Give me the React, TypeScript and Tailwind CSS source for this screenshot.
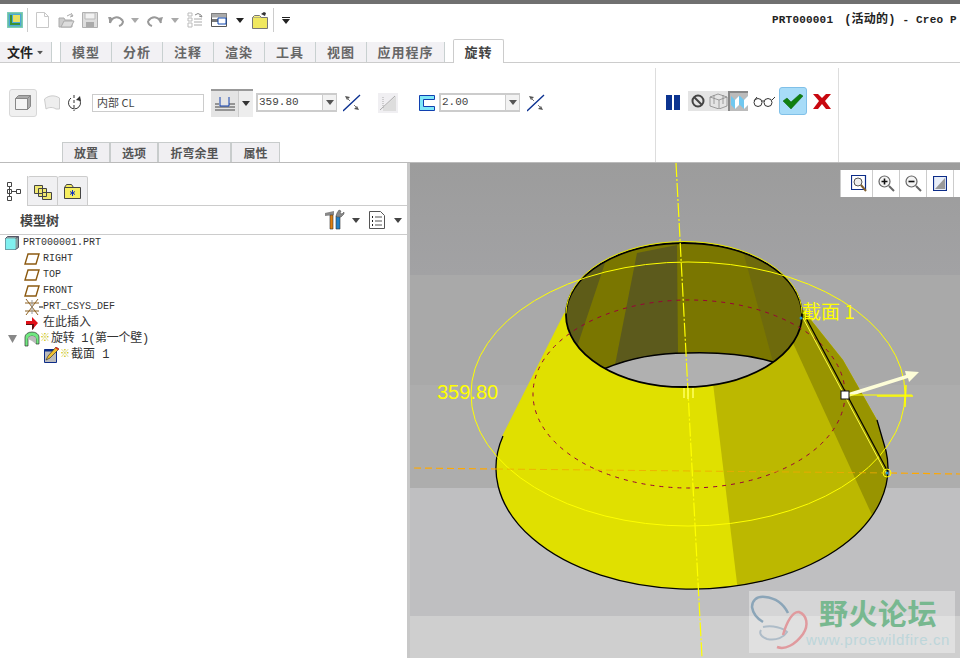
import type { ReactNode } from "react";

const cjk = "font-['Liberation_Mono','Noto_Sans_CJK_SC',monospace]";

const Caret = ({ className = "" }: { className?: string }) => (
    <svg width="8" height="5" viewBox="0 0 8 5" className={className}>
        <path d="M0 0h8L4 5z" fill="#555" />
    </svg>
);

const RibbonTab = ({ label, width }: { label: string; width: string }) => (
    <div className={`${width} h-[20px] flex items-center justify-center bg-[#f2f1f4] border-l border-[#c8d0d0] text-[13px] font-bold text-[#666] tracking-[1px]`}>
        {label}
    </div>
);

const SubTab = ({ label, width }: { label: string; width: string }) => (
    <div className={`${width} h-[20px] flex items-center justify-center bg-[#f0eff2] border border-b-0 border-[#c8cccc] text-[12px] font-bold text-[#555]`}>
        {label}
    </div>
);

const Flip = () => (
    <svg width="18" height="18" viewBox="0 0 18 18">
        <path d="M0 17L17 1" stroke="#0a3090" strokeWidth="1.3" />
        <path d="M2 2l5 1-3 3zM16 16l-5-1 3-3z" fill="#555" />
        <path d="M4 4l3 3M14 14l-3-3" stroke="#777" />
    </svg>
);

const SpinInput = ({ value, width }: { value: string; width: string }) => (
    <div className="flex h-[19px] border-2 border-[#ccc] border-r-1 bg-white">
        <div className={`${width} flex items-center pl-[1px] text-[11px] text-[#444] font-['Liberation_Mono',monospace]`}>{value}</div>
        <div className="w-[14px] bg-[#f2f2f2] flex items-center justify-center border-l border-[#ccc]">
            <Caret />
        </div>
    </div>
);

const QuickIcons = () => (
    <div className="flex items-center h-[32px] pl-[7px]">
        <svg width="16" height="16" viewBox="0 0 16 16">
            <rect width="16" height="16" fill="#7fc8e8" />
            <rect x="1" y="1" width="14" height="14" fill="#4aa8d8" stroke="#80d080" />
            <path d="M4 3v9h9" fill="none" stroke="#3c9030" strokeWidth="2" />
            <path d="M6 3h7v7H6z" fill="#e8e060" />
        </svg>
        <div className="w-px h-[24px] bg-[#ccc] ml-[4px] mr-[8px]" />
        <svg width="13" height="16" viewBox="0 0 13 16">
            <path d="M.5.5h8l4 4v11H.5z" fill="#fff" stroke="#c8c8c8" />
            <path d="M8.5.5v4h4" fill="none" stroke="#c8c8c8" />
        </svg>
        <svg width="17" height="16" viewBox="0 0 17 16" className="ml-[9px]">
            <path d="M1 6h5l1 2h7v7H1z" fill="#ccc" stroke="#aaa" />
            <path d="M3 15l3-6h10l-3 6z" fill="#ddd" stroke="#aaa" />
            <path d="M9 4q3-3 6 0M13 1l2 3-3 1" fill="none" stroke="#aaa" />
        </svg>
        <svg width="16" height="16" viewBox="0 0 16 16" className="ml-[7px]">
            <path d="M.5.5h15v15H.5z" fill="#ddd" stroke="#b0b0b0" />
            <path d="M3 1h10v6H3z" fill="#f2f2f2" stroke="#bbb" />
            <path d="M4 10h8v5H4z" fill="#aaa" />
        </svg>
        <svg width="16" height="13" viewBox="0 0 16 13" className="ml-[10px]">
            <path d="M2 3v6M2 9c2-6 8-8 13-2M11 12c3-1 4-3 4-5" fill="none" stroke="#999" strokeWidth="2" />
            <path d="M0 3l5 1-3 5z" fill="#999" />
        </svg>
        <Caret className="ml-[7px] opacity-50" />
        <svg width="16" height="13" viewBox="0 0 16 13" className="ml-[8px] scale-x-[-1]">
            <path d="M2 9c2-6 8-8 13-2M11 12c3-1 4-3 4-5" fill="none" stroke="#999" strokeWidth="2" />
            <path d="M0 3l5 1-3 5z" fill="#999" />
        </svg>
        <Caret className="ml-[8px] opacity-50" />
        <svg width="16" height="16" viewBox="0 0 16 16" className="ml-[8px]">
            <path d="M1 1h4v3H1zM1 6h4v3H1zM1 11h4v4H1z" fill="none" stroke="#bbb" />
            <path d="M7 13h8M7 10h8M7 7h8" stroke="#aaa" />
            <path d="M8 3q3-3 6 0l1 2-3-1" fill="none" stroke="#888" />
        </svg>
        <svg width="16" height="14" viewBox="0 0 16 14" className="ml-[8px]">
            <path d="M.5.5h15v13H.5z" fill="#fff" stroke="#555" />
            <path d="M.5.5h15v4H.5z" fill="#aaa" />
            <path d="M1 6h6v3H1z" fill="#777" />
            <path d="M7 5h8v6H7z" fill="#fff" stroke="#1048b0" />
        </svg>
        <Caret className="ml-[9px] [&>path]:fill-[#222]" />
        <svg width="16" height="18" viewBox="0 0 16 18" className="ml-[8px]">
            <path d="M.5 6.5h15v11H.5z" fill="#f0e860" stroke="#777" />
            <path d="M.5 6.5l2-2h5l2 2" fill="#f8f080" stroke="#777" />
            <path d="M9 3l3-2 2 1-1 3z" fill="#333" />
        </svg>
        <div className="w-px h-[24px] bg-[#ccc] ml-[5px] mr-[8px]" />
        <svg width="8" height="7" viewBox="0 0 8 7">
            <path d="M0 0h8v1H0z M0 2h8L4 7z" fill="#222" />
        </svg>
    </div>
);

const Ribbon = () => (
    <div className="h-[100px] flex border-t border-[#ccc]">
        <div className="w-[655px] shrink-0 flex flex-col">
            <div className="h-[79px] flex items-center pl-[9px]">
                <div className="w-[28px] h-[28px] rounded-[3px] bg-[#f0f0f0] border border-[#d8d8d8] flex items-center justify-center">
                    <svg width="16" height="15" viewBox="0 0 16 15">
                        <path d="M.5 3.5h12v11H.5z" fill="#f4f4f4" stroke="#888" />
                        <path d="M.5 3.5l3-3h12l-3 3zM12.5 3.5l3-3v11l-3 3z" fill="#aaa" stroke="#888" />
                    </svg>
                </div>
                <svg width="16" height="15" viewBox="0 0 16 15" className="ml-[7px]">
                    <path d="M.5 4C5 0 11 0 15.5 3v11H12c-3-2-7-2-10 0z" fill="#eee" stroke="#ccc" />
                </svg>
                <svg width="15" height="16" viewBox="0 0 15 16" className="ml-[7px]">
                    <path d="M4 3a6 6 0 1 0 7 0" fill="none" stroke="#333" />
                    <path d="M7 0v16" stroke="#333" strokeDasharray="3 2" />
                    <path d="M9 5l4-4 1 5z" fill="#333" />
                </svg>
                <div className="ml-[10px] w-[112px] h-[18px] border border-[#ccc] flex items-center pl-[4px] text-[11px] text-[#444]">内部 CL</div>
                <div className="ml-[7px] w-[42px] h-[28px] bg-[#e4e4e4] border-t-2 border-[#999] flex">
                    <div className="w-[27px] flex items-center justify-center">
                        <svg width="20" height="16" viewBox="0 0 20 16">
                            <path d="M0 8h4M14 8h6M0 11h20M0 14h20" stroke="#444" />
                            <path d="M5 1v9h9V1" fill="none" stroke="#1040b0" />
                        </svg>
                    </div>
                    <div className="flex-1 bg-[#ededed] flex items-center justify-center border-l border-[#ccc]">
                        <Caret className="[&>path]:fill-[#333]" />
                    </div>
                </div>
                <div className="ml-[3px]"><SpinInput value="359.80" width="w-[64px]" /></div>
                <div className="ml-[6px]"><Flip /></div>
                <div className="ml-[17px] w-[20px] h-[20px] bg-[#f0eff2] flex items-center justify-center">
                    <svg width="16" height="16" viewBox="0 0 16 16">
                        <path d="M3 13L16 1v15H3z" fill="#ddd" />
                        <path d="M0 15L15 1" stroke="#aaa" />
                        <path d="M3 2v12" stroke="#aaa" strokeDasharray="1 1" />
                    </svg>
                </div>
                <svg width="16" height="16" viewBox="0 0 16 16" className="ml-[21px]">
                    <path d="M.5.5h15v4H4.500v7h11v4H.5z" fill="#7fe8f8" stroke="#1040b0" />
                </svg>
                <div className="ml-[4px]"><SpinInput value="2.00" width="w-[64px]" /></div>
                <div className="ml-[7px]"><Flip /></div>
            </div>
            <div className="flex pl-[62px]">
                <SubTab label="放置" width="w-[48px]" />
                <SubTab label="选项" width="w-[48px]" />
                <SubTab label="折弯余里" width="w-[73px]" />
                <SubTab label="属性" width="w-[49px]" />
            </div>
        </div>
        <div className="w-[184px] mt-[5px] border-x border-[#ddd] flex items-start pt-[19px] pl-[10px]">
            <div className="flex gap-[2px] mt-[8px] w-[14px] h-[15px] shrink-0">
                <div className="w-[6px] bg-[#0c3490]" />
                <div className="w-[6px] bg-[#0c3490]" />
            </div>
            <div className="ml-[8px] mt-[4px] flex h-[20px] w-[60px] shrink-0 bg-[#e4e4e4]">
                <div className="w-[20px] flex items-center justify-center">
                    <svg width="14" height="14" viewBox="0 0 14 14">
                        <circle cx="7" cy="7" r="5.5" fill="none" stroke="#444" strokeWidth="2" />
                        <path d="M3 3l8 8" stroke="#444" strokeWidth="2" />
                    </svg>
                </div>
                <div className="w-[20px] flex items-center justify-center">
                    <svg width="19" height="16" viewBox="0 0 19 16">
                        <path d="M1 4l8-3 9 3v9l-8 3-9-3zM1 4l9 3 8-3M10 7v9M5 2l0 9M14 2v9" fill="none" stroke="#888" strokeWidth=".8" />
                    </svg>
                </div>
                <div className="w-[20px] bg-[#bbb] border-l-2 border-t-2 border-[#888] flex items-center justify-center">
                    <svg width="17" height="13" viewBox="0 0 17 13">
                        <path d="M0 0l4 4 4-4 1 0 4 4 4-4v9l-4 4-4-4-1 0-4 4-4-4z" fill="#70c8f0" />
                        <path d="M4 4l4-4v9l-4 4zM13 4l4-4v9l-4 4z" fill="#fff" />
                    </svg>
                </div>
            </div>
            <svg width="22" height="11" viewBox="0 0 22 11" className="ml-[5px] mt-[9px] shrink-0">
                <circle cx="5" cy="6.5" r="4" fill="#fff" stroke="#333" />
                <circle cx="15" cy="6.5" r="4" fill="#fff" stroke="#333" />
                <path d="M9 5l2 0M19 4l3-3M1 5l3-4" fill="none" stroke="#333" />
            </svg>
            <div className="ml-[4px] w-[28px] h-[28px] rounded-[3px] bg-[#a8dcf8] border border-[#80c0e8] flex items-center justify-center shrink-0">
                <svg width="20" height="15" viewBox="0 0 20 15">
                    <path d="M0 7l4-3 4 4 9-8 3 2L8 15z" fill="#108010" stroke="#0a600a" strokeWidth=".5" />
                </svg>
            </div>
            <svg width="18" height="16" viewBox="0 0 18 16" className="ml-[6px] mt-[6px] shrink-0">
                <path d="M0 1h5l4 4 4-4h5l-6 7 6 8h-5l-4-5-4 5H0l6-8z" fill="#c80810" />
            </svg>
        </div>
    </div>
);

const Row = ({ icon, indent, children }: { icon: ReactNode; indent: string; children: ReactNode }) => (
    <div className={`h-[16px] flex items-center ${indent} text-[10px] leading-none text-[#333] whitespace-pre`}>
        {icon}
        {children}
    </div>
);

const Plane = () => (
    <svg width="16" height="12" viewBox="0 0 16 12" className="mr-[3px]">
        <path d="M4 1h11l-3 10H1z" fill="none" stroke="#8c5a10" strokeWidth="1.4" />
    </svg>
);

const Star = () => <span className="text-[#c8c000] text-[10px] mr-[1px]">※</span>;

const ModelTree = () => (
    <div className="w-[407px] shrink-0 flex flex-col bg-white">
        <div className="h-[13px]" />
        <div className="h-[30px] flex">
            <div className="w-[28px] bg-white border-r border-[#ccc] flex items-center justify-center">
                <svg width="14" height="19" viewBox="0 0 14 19">
                    <path d="M.5.5h4v4h-4zM.5 7.5h4v4h-4zM9.5 7.5h4v4h-4zM.5 14.5h4v4h-4zM2.5 4.5v10M4.5 9.5h5" fill="#fff" stroke="#444" />
                </svg>
            </div>
            <div className="w-[30px] bg-[#f0f0f2] border-r border-t border-[#ccc] rounded-t-[2px] flex items-center justify-center border-b">
                <svg width="18" height="18" viewBox="0 0 18 18">
                    <path d="M.5 3.5h8v8h-8zM4.5 6.5h8v8h-8zM8.5 10.5h9v7h-9z" fill="#f0e870" stroke="#444" />
                </svg>
            </div>
            <div className="w-[30px] bg-[#f0f0f2] border-r border-t border-b border-[#ccc] rounded-t-[2px] flex items-center justify-center">
                <svg width="17" height="15" viewBox="0 0 17 15">
                    <path d="M.5 3.5h16v11H.5zM.5 3.5l2-3h5l2 3" fill="#f6ee60" stroke="#444" />
                    <path d="M8.500 6v6M6 7.500l5 3M11 7.500l-5 3" stroke="#1030c0" />
                </svg>
            </div>
            <div className="flex-1 border-b border-[#ccc]" />
        </div>
        <div className="h-[29px] flex items-center pl-[20px] border-b border-[#ccc]">
            <span className="text-[13px] font-bold text-[#444] font-['Noto_Sans_CJK_SC',sans-serif]">模型树</span>
            <svg width="20" height="22" viewBox="0 0 20 22" className="ml-auto">
                <path d="M0 4l9-2v4L0 7z" fill="#888" />
                <path d="M5 6h3v14H5z" fill="#e08010" stroke="#333" strokeWidth=".6" />
                <path d="M11 7h4v13h-4z" fill="#2080c8" stroke="#333" strokeWidth=".6" />
                <path d="M11 7l1-3 2-3 2 1-1 2 2 1 2-2v2l-3 3h-4z" fill="#888" stroke="#444" strokeWidth=".5" />
            </svg>
            <Caret className="ml-[7px] mr-[9px] [&>path]:fill-[#444]" />
            <svg width="16" height="18" viewBox="0 0 16 18">
                <path d="M.5.5h11l4 4v13H.5z" fill="#fff" stroke="#555" />
                <path d="M3 6h1M3 10h1M3 14h1" stroke="#222" strokeWidth="2" />
                <path d="M6 6h7M6 10h7M6 14h7" stroke="#555" />
            </svg>
            <Caret className="ml-[9px] mr-[5px] [&>path]:fill-[#444]" />
        </div>
        <div className={cjk}>
            <Row
                indent="pl-[5px]"
                icon={
                    <svg width="14" height="14" viewBox="0 0 14 14" className="mr-[4px]">
                        <path d="M.5 2.500h10v11H.5z" fill="#80f0f0" stroke="#556" />
                        <path d="M.5 2.500l2-2h11v11l-3 2zM10.500 2.500l3-2" fill="#88a0a0" stroke="#556" />
                        <path d="M.5 2.500h10v11H.5z" fill="#80f0f0" />
                    </svg>
                }
            >
                PRT000001.PRT
            </Row>
            <Row indent="pl-[24px]" icon={<Plane />}>RIGHT</Row>
            <Row indent="pl-[24px]" icon={<Plane />}>TOP</Row>
            <Row indent="pl-[24px]" icon={<Plane />}>FRONT</Row>
            <Row
                indent="pl-[24px]"
                icon={
                    <svg width="19" height="16" viewBox="0 0 19 16">
                        <path d="M1 4h14M1 12h14M2 0l12 16M14 0L2 16" stroke="#8c6020" />
                        <path d="M8 1v14" stroke="#999" />
                        <path d="M15 7h4v2h-4z" fill="#888" />
                    </svg>
                }
            >
                PRT_CSYS_DEF
            </Row>
            <Row
                indent="pl-[26px]"
                icon={
                    <svg width="12" height="13" viewBox="0 0 12 13" className="mr-[5px]">
                        <path d="M0 4h6V0l6 6-6 7V8H0z" fill="#e01018" />
                        <path d="M0 8h6v5l2-2V7H0z" fill="#601010" />
                    </svg>
                }
            >
                <span className="text-[12px]">在此插入</span>
            </Row>
            <Row
                indent="pl-[8px]"
                icon={
                    <>
                        <svg width="10" height="8" viewBox="0 0 10 8" className="mr-[6px]">
                            <path d="M0 0h9L4.500 8z" fill="#888" />
                        </svg>
                        <svg width="16" height="16" viewBox="0 0 16 16">
                            <path d="M1 15V6a7 5 0 0 1 14 0v7h-3V8a4 3 0 0 0-8 0v7z" fill="#70e880" stroke="#333" strokeWidth=".7" />
                            <path d="M4 8a4 3 0 0 1 8 0v5l-4-3z" fill="#bbb" />
                        </svg>
                    </>
                }
            >
                <Star />
                <span className="text-[12px] tracking-[-0.3px]">旋转 1(第一个壁)</span>
            </Row>
            <Row
                indent="pl-[44px]"
                icon={
                    <svg width="16" height="16" viewBox="0 0 16 16">
                        <path d="M.5 2.500h12v13H.5z" fill="#bbb" stroke="#0c2c88" />
                        <path d="M.5 2.500h12v2H.5z" fill="#0c2c88" />
                        <path d="M2 13l2-4 8-9 3 2-9 9z" fill="#f0c030" stroke="#222" strokeWidth=".6" />
                        <path d="M12 0l3 2-1 1-3-2z" fill="#e02020" />
                    </svg>
                }
            >
                <Star />
                <span className="text-[12px]">截面 1</span>
            </Row>
        </div>
    </div>
);

const ViewTool = ({ children }: { children: ReactNode }) => (
    <div className="w-[27px] h-[27px] border-r border-[#ccc] flex items-center justify-center">{children}</div>
);

const Lens = ({ sign }: { sign: "+" | "-" }) => (
    <svg width="17" height="17" viewBox="0 0 17 17">
        <circle cx="6.500" cy="6.500" r="5.500" fill="#f4f4f4" stroke="#666" strokeWidth="1.200" />
        <path d="M11 11l5 5" stroke="#666" strokeWidth="2" />
        <path d={sign === "+" ? "M3.500 6.500h6M6.500 3.500v6" : "M3.500 6.500h6"} stroke="#111" strokeWidth="1.600" />
    </svg>
);

const Scene = () => (
    <svg viewBox="410 163 550 495" className="absolute left-0 top-0 w-[550px] h-[495px]">
        <defs>
            <clipPath id="body">
                <path d="M565 313L503 436A196 121 0 1 0 886 451L877 420L843 360L803 310Z" />
            </clipPath>
            <clipPath id="mouth">
                <ellipse cx="684" cy="315" rx="118" ry="72" />
            </clipPath>
        </defs>
        <g clipPath="url(#body)">
            <rect x="480" y="240" width="430" height="360" fill="#e0e000" />
            <path d="M703 300L739 600H910V300Z" fill="#bcb800" />
            <path d="M770 293L900 576H910V290Z" fill="#989400" />
        </g>
        <path d="M503 436A196 121 0 1 0 886 451L877 420" fill="none" stroke="#000" strokeWidth="1.300" />
        <path d="M565 313L503 436" stroke="#e0e000" strokeWidth="1.500" />
        <g clipPath="url(#mouth)">
            <rect x="560" y="240" width="250" height="150" fill="#7a7600" />
            <path d="M560 240L606 260L577 347L560 347Z" fill="#5e5c18" />
            <path d="M637 253L677 245L678 353L615 365Z" fill="#5c5a1c" />
            <path d="M740 240L810 240L810 365L773 362Z" fill="#6e6a0c" />
            <path d="M605 368.500C630 358 660 353 687 353C720 352 750 355 773 362L760 395H600Z" fill="#b0b0b0" />
        </g>
        <path d="M605 368.500C630 358 660 353 687 353C720 352 750 355 773 362" fill="none" stroke="#000" strokeWidth="1.500" />
        <ellipse cx="684" cy="315" rx="118" ry="72" fill="none" stroke="#000" strokeWidth="1.800" />
        <path d="M566 315A118 72 0 0 1 802 315" fill="none" stroke="#e8e800" strokeWidth="1" transform="translate(0 -1.500)" />

        <ellipse cx="689" cy="394" rx="156" ry="94" fill="none" stroke="#9a0038" strokeWidth="1" strokeDasharray="4 5" />
        <ellipse cx="688" cy="394" rx="217" ry="132" fill="none" stroke="#ffff00" strokeWidth="1" />

        <path d="M676 163L702 658" stroke="#ffff00" strokeWidth="1.200" strokeDasharray="14 2 2 2" />
        <path d="M414 468L496 469" stroke="#ffa800" strokeWidth="1.200" strokeDasharray="7 4" />
        <path d="M496 469L890 473" stroke="#f0a800" strokeWidth=".8" strokeDasharray="7 4" />
        <path d="M890 473L960 474" stroke="#ffa800" strokeWidth="1.200" strokeDasharray="7 4" />

        <path d="M805 316L888 472" stroke="#000" strokeWidth="1.200" />
        <path d="M803 318L886 473" stroke="#ffff40" strokeWidth="1" />
        <path d="M845 394L906 375L905 371L919 372L909 382L908 378L848 397Z" fill="#fdfdd8" />
        <path d="M849 395H912" stroke="#ffff00" strokeWidth="1" />
        <path d="M877 396H913" stroke="#ffff00" strokeWidth="1.600" />
        <path d="M906 385L905 407" stroke="#ffff00" strokeWidth="1.500" />
        <rect x="841" y="391" width="8" height="8" fill="#fff" stroke="#111" />
        <circle cx="887" cy="473" r="4" fill="none" stroke="#ffff00" />
        <circle cx="887" cy="473" r="1.500" fill="#2090d0" />
        <circle cx="801" cy="318" r="1.500" fill="#2090d0" />
        <path d="M684 388v10M688 388v11M693 388v10" stroke="#ffff60" strokeWidth="1.500" />
    </svg>
);

const Watermark = () => (
    <div className="absolute left-[339px] top-[428px] w-[206px] h-[62px] bg-white/35 overflow-hidden">
        <svg width="62" height="62" viewBox="0 0 62 62" className="absolute left-0 top-0">
            <path d="M39 22C34 12 26 7 16 6C7 5 3 10 3 16C4 23 9 28 14 31" fill="none" stroke="#8ba5b8" strokeWidth="2.500" />
            <path d="M14 36C24 34 34 37 38 41C35 46 28 50 18 48C12 46 10 42 12 39" fill="none" stroke="#aebcc8" strokeWidth="2" />
            <path d="M28 56C36 59 46 54 54 43C60 34 58 24 50 21C44 20 38 30 34 44" fill="none" stroke="#e09a9e" strokeWidth="2.500" />
        </svg>
        <div className="absolute left-[70px] top-[3px] text-[29px] leading-[36px] font-bold text-[#78b890] tracking-[0.5px] font-['Noto_Sans_CJK_SC',sans-serif] whitespace-nowrap">野火论坛</div>
        <div className="absolute left-[57px] top-[39px] text-[15px] leading-[20px] text-[#bdd6da] font-['Liberation_Sans',sans-serif] tracking-[0.6px] whitespace-nowrap">www.proewildfire.cn</div>
    </div>
);

const Viewport = () => (
    <div className="relative flex-1 flex flex-col overflow-hidden border-l-[3px] border-[#c8c8c8]">
        <div className="h-[112px] bg-gradient-to-b from-[#9c9c9c] to-[#a2a2a4]" />
        <div className="h-[110px] bg-[#a9a9a9]" />
        <div className="h-[103px] bg-[#adadad]" />
        <div className="h-[128px] bg-[#bfbfc1]" />
        <div className="flex-1 bg-[#cfcfcf]" />
        <Scene />
        <div className="absolute left-[430px] top-[7px] h-[27px] w-[120px] bg-white flex pl-[5px] border-l border-[#ccc]">
            <ViewTool>
                <svg width="16" height="17" viewBox="0 0 16 17">
                    <path d="M.5.500h14v14H.5z" fill="#fff" stroke="#0c2c88" strokeWidth="1.200" />
                    <circle cx="7" cy="7" r="4" fill="#eee" stroke="#555" />
                    <path d="M10 10l5 6" stroke="#806030" strokeWidth="2" />
                </svg>
            </ViewTool>
            <ViewTool><Lens sign="+" /></ViewTool>
            <ViewTool><Lens sign="-" /></ViewTool>
            <ViewTool>
                <svg width="14" height="15" viewBox="0 0 14 15">
                    <path d="M.5.500h13v14H.5z" fill="#e8eef8" stroke="#0c2c88" strokeWidth="1.200" />
                    <path d="M2 13L12 2v11z" fill="#999" />
                </svg>
            </ViewTool>
        </div>
        <div className="absolute left-[27px] top-[216px] text-[20px] leading-[26px] text-[#ffff00] font-['Liberation_Sans',sans-serif]">359.80</div>
        <div className="absolute left-[392px] top-[135px] text-[19px] leading-[26px] text-[#ffff00] font-['Noto_Sans_CJK_SC',sans-serif] whitespace-pre">截面 1</div>
        <Watermark />
    </div>
);

const App = () => {
    return (
        <div className="w-[960px] h-[658px] flex flex-col overflow-hidden bg-white font-['Noto_Sans_CJK_SC',sans-serif]">
            <div className="h-[4px] bg-[#707070] shrink-0" />
            <div className="flex justify-between shrink-0 h-[35px]">
                <QuickIcons />
                <div className="w-[188px] pt-[9px] text-[11px] leading-[14px] font-bold tracking-[0.2px] text-[#222] whitespace-pre font-['Liberation_Mono','Noto_Sans_CJK_SC',monospace]">
                    PRT000001<span className="ml-[11px] text-[12px]">(活动的)</span> - Creo P
                </div>
            </div>
            <div className="h-[23px] shrink-0 flex items-end">
                <div className="w-[52px] h-[20px] flex items-center justify-center gap-[3px] bg-[#f2f1f4] border-r border-[#c8d0d0] text-[13px] font-bold text-[#222]">
                    文件
                    <Caret className="scale-75" />
                </div>
                <div className="w-[8px] h-[20px]" />
                <RibbonTab label="模型" width="w-[51px]" />
                <RibbonTab label="分析" width="w-[51px]" />
                <RibbonTab label="注释" width="w-[51px]" />
                <RibbonTab label="渲染" width="w-[51px]" />
                <RibbonTab label="工具" width="w-[51px]" />
                <RibbonTab label="视图" width="w-[51px]" />
                <div className="w-[79px] h-[20px] flex items-center justify-center bg-[#f2f1f4] border-x border-[#c8d0d0] text-[13px] font-bold text-[#666] tracking-[1px]">应用程序</div>
                <div className="w-[8px]" />
                <div className="w-[51px] h-[24px] -mb-[1px] relative z-10 flex items-center justify-center bg-white border border-b-0 border-[#ccc] rounded-t-[2px] text-[13px] font-bold text-[#444] tracking-[1px]">旋转</div>
            </div>
            <Ribbon />
            <div className="flex-1 flex min-h-0 border-t border-[#bbb]">
                <ModelTree />
                <Viewport />
            </div>
        </div>
    );
};

export default App;
